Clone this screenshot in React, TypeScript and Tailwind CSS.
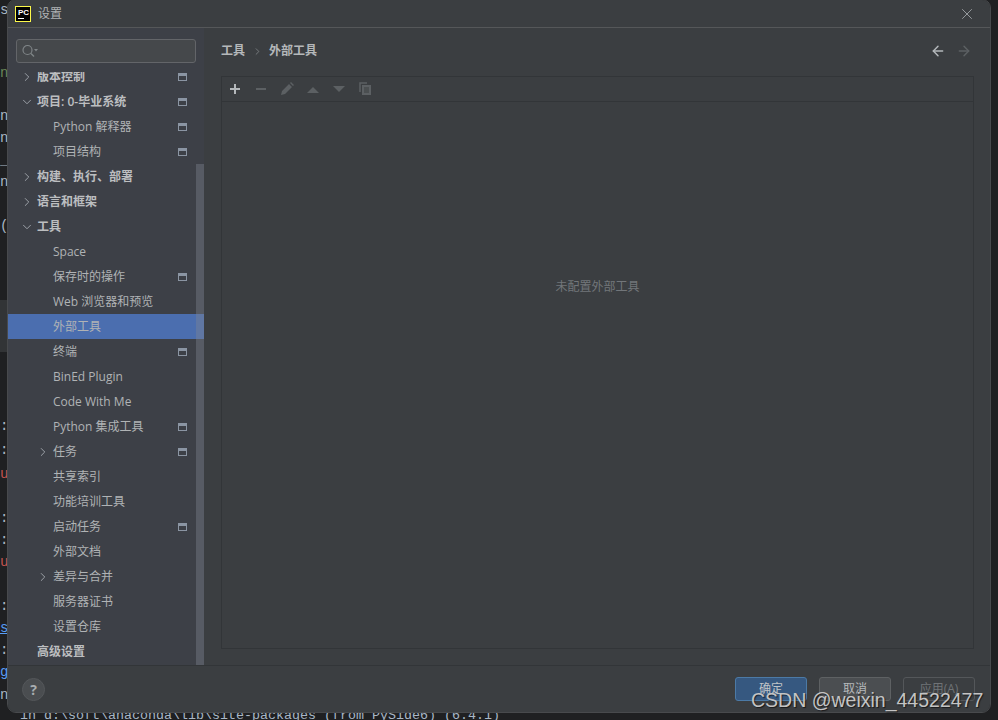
import { ArrowLeft, ArrowRight, ChevronDown, ChevronRight, X } from "lucide-react";

type Row = {
  label: string;
  level: 0 | 1;
  arrow?: "right" | "down";
  scoped?: boolean;
  selected?: boolean;
};

const rows: Row[] = [
  { label: "版本控制", level: 0, arrow: "right", scoped: true },
  { label: "项目: 0-毕业系统", level: 0, arrow: "down", scoped: true },
  { label: "Python 解释器", level: 1, scoped: true },
  { label: "项目结构", level: 1, scoped: true },
  { label: "构建、执行、部署", level: 0, arrow: "right" },
  { label: "语言和框架", level: 0, arrow: "right" },
  { label: "工具", level: 0, arrow: "down" },
  { label: "Space", level: 1 },
  { label: "保存时的操作", level: 1, scoped: true },
  { label: "Web 浏览器和预览", level: 1 },
  { label: "外部工具", level: 1, selected: true },
  { label: "终端", level: 1, scoped: true },
  { label: "BinEd Plugin", level: 1 },
  { label: "Code With Me", level: 1 },
  { label: "Python 集成工具", level: 1, scoped: true },
  { label: "任务", level: 1, arrow: "right", scoped: true },
  { label: "共享索引", level: 1 },
  { label: "功能培训工具", level: 1 },
  { label: "启动任务", level: 1, scoped: true },
  { label: "外部文档", level: 1 },
  { label: "差异与合并", level: 1, arrow: "right" },
  { label: "服务器证书", level: 1 },
  { label: "设置仓库", level: 1 },
  { label: "高级设置", level: 0 },
];

// bits of the editor that stick out left of the dialog
const editorBits = [
  { y: 1, text: "s", color: "text-[#a9b7c6]" },
  { y: 64, text: "n", color: "text-[#6a8759]" },
  { y: 107, text: "n", color: "text-[#a9b7c6]" },
  { y: 129, text: "n", color: "text-[#a9b7c6]" },
  { y: 151, text: "_", color: "text-[#a9b7c6]" },
  { y: 173, text: "n", color: "text-[#a9b7c6]" },
  { y: 217, text: "(", color: "text-[#a9b7c6]" },
  { y: 417, text: ":", color: "text-[#a9b7c6]" },
  { y: 441, text: ":", color: "text-[#a9b7c6]" },
  { y: 465, text: "u", color: "text-[#c75450]" },
  { y: 509, text: ":", color: "text-[#a9b7c6]" },
  { y: 531, text: ":", color: "text-[#a9b7c6]" },
  { y: 553, text: "u", color: "text-[#c75450]" },
  { y: 597, text: ":", color: "text-[#a9b7c6]" },
  { y: 619, text: "s", color: "text-[#589df6] underline" },
  { y: 641, text: ":", color: "text-[#a9b7c6]" },
  { y: 663, text: "g", color: "text-[#589df6] underline" },
  { y: 686, text: "n", color: "text-[#a9b7c6]" },
];

function ScopeIcon() {
  return (
    <svg width="9" height="8" viewBox="0 0 9 8" className="shrink-0">
      <rect x="0.5" y="0.5" width="8" height="7" fill="none" stroke="#8b95a3" />
      <rect x="0" y="0" width="9" height="3" fill="#8b95a3" />
    </svg>
  );
}

function TreeRow({ row }: { row: Row }) {
  return (
    <div
      className={`flex h-[25px] items-center ${row.selected ? "bg-[#4b6eaf]" : ""} ${
        row.level === 0 ? "pl-[11px]" : "pl-[27px]"
      }`}
    >
      <span className="flex w-4 shrink-0 items-center justify-center text-[#a8adb3]">
        {row.arrow === "right" && <ChevronRight size={14} strokeWidth={1.5} />}
        {row.arrow === "down" && <ChevronDown size={14} strokeWidth={1.5} />}
      </span>
      <span
        className={`ml-[2px] flex-1 whitespace-nowrap ${
          row.level === 0 ? "font-semibold text-[#bcbec0]" : "text-[#b0b3b5]"
        }`}
      >
        {row.label}
      </span>
      {row.scoped && (
        <span className="mr-[17px] flex">
          <ScopeIcon />
        </span>
      )}
    </div>
  );
}

function Toolbar() {
  return (
    <div className="flex h-[25px] items-center gap-[10px] border-b border-[#323538] pl-[5px]">
      <svg width="16" height="16" viewBox="0 0 16 16">
        <path d="M8 3v10M3 8h10" stroke="#b4b8bb" strokeWidth="2" />
      </svg>
      <svg width="16" height="16" viewBox="0 0 16 16">
        <path d="M3 8h10" stroke="#5c6063" strokeWidth="2" />
      </svg>
      <svg width="16" height="16" viewBox="0 0 16 16">
        <path d="M2 14l1-4 7-7 3 3-7 7zM11 2l1-1 3 3-1 1z" fill="#5c6063" />
      </svg>
      <svg width="16" height="16" viewBox="0 0 16 16">
        <path d="M2 12l6-6 6 6z" fill="#5c6063" />
      </svg>
      <svg width="16" height="16" viewBox="0 0 16 16">
        <path d="M2 5h12l-6 6z" fill="#5c6063" />
      </svg>
      <svg width="16" height="16" viewBox="0 0 16 16" fill="none">
        <path d="M3 11V2h7" stroke="#5c6063" strokeWidth="1.5" />
        <path d="M5 4h9v10H5z" fill="#5c6063" />
        <path d="M7 7h5M7 9h5M7 11h5" stroke="#3b3e41" />
      </svg>
    </div>
  );
}

export default function App() {
  return (
    <div
      className="relative h-[720px] w-[998px] overflow-hidden bg-[#1f2022] text-[12px] leading-none"
      style={{ fontFamily: '"Open Sans", "Noto Sans CJK SC", sans-serif' }}
    >
      {/* editor behind the dialog */}
      {editorBits.map((b) => (
        <span
          key={b.y}
          className={`absolute left-0 font-['Liberation_Mono',monospace] text-[14px] leading-[18px] ${b.color}`}
          style={{ top: b.y }}
        >
          {b.text}
        </span>
      ))}
      <div className="absolute left-0 top-[300px] h-[52px] w-[8px] bg-[#323436]" />
      <div className="absolute left-[20px] top-[708px] whitespace-nowrap font-['Liberation_Mono',monospace] text-[13.33px] leading-[16px] text-[#a9b7c6]">
        in d:\soft\anaconda\lib\site-packages (from PySide6) (6.4.1)
      </div>

      {/* dialog */}
      <div className="absolute left-[8px] top-0 flex h-[712px] w-[982px] flex-col overflow-hidden rounded-[8px] bg-[#3b3e41] outline outline-1 outline-[#484a4d]">
        <div className="flex h-[28px] shrink-0 items-center border-b border-[#555759] pl-[7px] pr-[15px]">
          <span className="relative h-4 w-4 shrink-0 border border-[#fcf84a] bg-black">
            <span className="absolute left-[2px] top-[1px] font-['Liberation_Sans',sans-serif] text-[8px] font-bold leading-[9px] text-white">
              PC
            </span>
            <span className="absolute bottom-[2px] left-[2px] h-px w-[6px] bg-white" />
          </span>
          <span className="ml-[7px] flex-1 text-[#b0b3b5]">设置</span>
          <X size={18} strokeWidth={1} className="mr-[-1px] text-[#b4b8bb]" />
        </div>

        <div className="flex min-h-0 flex-1">
          {/* sidebar */}
          <div className="relative flex w-[196px] shrink-0 flex-col bg-[#3d4047]">
            <div className="h-[11px] shrink-0" />
            <div className="mx-2 flex h-[24px] shrink-0 items-center rounded-[3px] border border-[#636569] bg-[#45484b] pl-1">
              <svg width="18" height="14" viewBox="0 0 18 14" fill="none">
                <circle cx="6.5" cy="6" r="4.5" stroke="#7f8487" strokeWidth="1.2" />
                <path d="M10 9.5l3 3" stroke="#7f8487" strokeWidth="1.4" />
                <path d="M13 5h4l-2 2.5z" fill="#7f8487" />
              </svg>
            </div>
            <div className="mt-[9px] min-h-0 flex-1 overflow-hidden">
              <div className="-mt-[8px]">
                {rows.map((r) => (
                  <TreeRow key={r.label} row={r} />
                ))}
              </div>
            </div>
            <div className="absolute bottom-0 right-0 h-[501px] w-[8px] bg-[#7f8490]/40" />
          </div>

          {/* content */}
          <div className="flex min-w-0 flex-1 flex-col pl-[17px] pr-[16px]">
            <div className="flex h-[48px] shrink-0 items-center pb-[2px]">
              <span className="font-semibold text-[#b5b8ba]">工具</span>
              <ChevronRight size={11} strokeWidth={1.5} className="ml-[7px] text-[#8d9194]" />
              <span className="ml-[6px] flex-1 font-semibold text-[#b5b8ba]">外部工具</span>
              <ArrowLeft size={16} strokeWidth={2.2} className="text-[#b4b8bb]" />
              <ArrowRight size={16} strokeWidth={2.2} className="ml-[10px] mr-[2px] text-[#5c6063]" />
            </div>
            <div className="flex h-[573px] shrink-0 flex-col border border-[#323538]">
              <Toolbar />
              <div className="flex flex-1 justify-center pt-[179px] text-[#72767a]">
                未配置外部工具
              </div>
            </div>
          </div>
        </div>

        <div className="flex h-[47px] shrink-0 items-start border-t border-[#323538] pl-[14px] pr-[15px]">
          <span className="mt-[12px] flex h-[23px] w-[23px] shrink-0 items-center justify-center rounded-full border border-[#54575a] bg-[#4a4d50] text-[14px] font-bold text-[#a8adb0]">
            ?
          </span>
          <div className="ml-auto mt-[11px] flex gap-3">
            <button className="flex h-[24px] w-[72px] items-center justify-center rounded-[3px] border border-[#4c7aa6] bg-[#365880] text-[#c0c4c7]">
              确定
            </button>
            <button className="flex h-[24px] w-[72px] items-center justify-center rounded-[3px] border border-[#5e6163] bg-[#4b4e51] text-[#b5b8ba]">
              取消
            </button>
            <button className="flex h-[24px] w-[72px] items-center justify-center rounded-[3px] border border-[#54575a] text-[#6f7376]">
              应用(A)
            </button>
          </div>
        </div>
      </div>

      {/* csdn watermark */}
      <div className="absolute left-[751px] top-[689px] whitespace-nowrap font-['Liberation_Sans',sans-serif] text-[19.5px] leading-[22px] text-[#c4c4c4] [text-shadow:1px_1px_1px_rgba(0,0,0,0.6)]">
        CSDN @weixin_44522477
      </div>
    </div>
  );
}
